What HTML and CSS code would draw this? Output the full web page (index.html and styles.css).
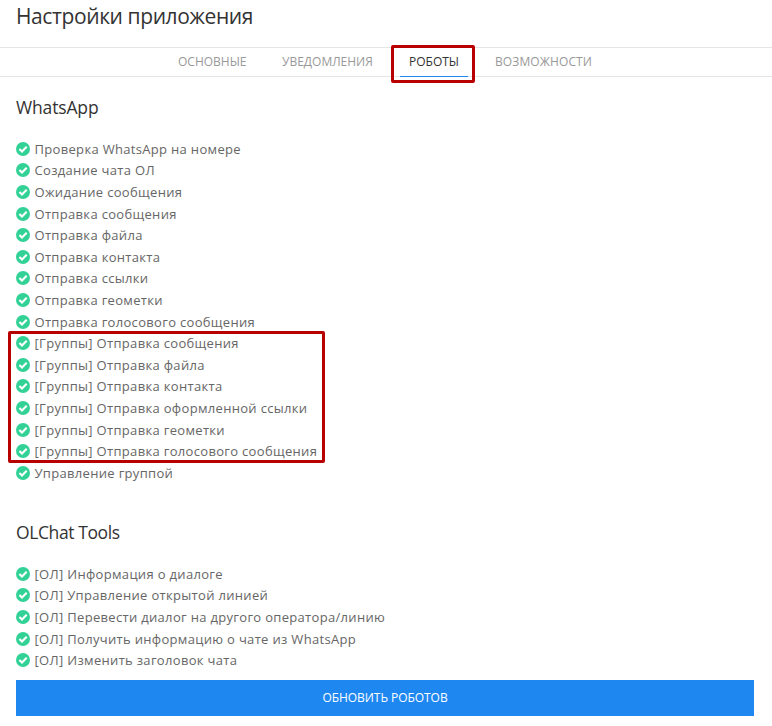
FILE: index.html
```html
<!DOCTYPE html>
<html lang="ru">
<head>
<meta charset="utf-8">
<title>Настройки приложения</title>
<link rel="stylesheet" href="styles.css">
</head>
<body>
<svg class="symbols" aria-hidden="true">
  <symbol id="check" viewBox="0 0 14 14">
    <circle cx="7" cy="7" r="7" fill="#32d296"/>
    <path d="M3.4 7 6 9.5 10.7 4.8" fill="none" stroke="#fff" stroke-width="2.1"/>
  </symbol>
</svg>
<h1 class="title">Настройки приложения</h1>
<nav class="tabs">
  <a class="tab t1">ОСНОВНЫЕ</a>
  <a class="tab t2">УВЕДОМЛЕНИЯ</a>
  <a class="tab t3 active">РОБОТЫ<span class="mark mark-tab"></span></a>
  <a class="tab t4">ВОЗМОЖНОСТИ</a>
</nav>
<main class="content">
  <h2 class="heading wa">WhatsApp</h2>
  <ul class="list">
    <li><svg><use href="#check"/></svg><span>Проверка WhatsApp на номере</span></li>
    <li><svg><use href="#check"/></svg><span>Создание чата ОЛ</span></li>
    <li><svg><use href="#check"/></svg><span>Ожидание сообщения</span></li>
    <li><svg><use href="#check"/></svg><span>Отправка сообщения</span></li>
    <li><svg><use href="#check"/></svg><span>Отправка файла</span></li>
    <li><svg><use href="#check"/></svg><span>Отправка контакта</span></li>
    <li><svg><use href="#check"/></svg><span>Отправка ссылки</span></li>
    <li><svg><use href="#check"/></svg><span>Отправка геометки</span></li>
    <li><svg><use href="#check"/></svg><span>Отправка голосового сообщения</span></li>
    <li><svg><use href="#check"/></svg><span>[Группы] Отправка сообщения</span><span class="mark mark-groups"></span></li>
    <li><svg><use href="#check"/></svg><span>[Группы] Отправка файла</span></li>
    <li><svg><use href="#check"/></svg><span>[Группы] Отправка контакта</span></li>
    <li><svg><use href="#check"/></svg><span>[Группы] Отправка оформленной ссылки</span></li>
    <li><svg><use href="#check"/></svg><span>[Группы] Отправка геометки</span></li>
    <li><svg><use href="#check"/></svg><span>[Группы] Отправка голосового сообщения</span></li>
    <li><svg><use href="#check"/></svg><span>Управление группой</span></li>
  </ul>
  <h2 class="heading ol">OLChat Tools</h2>
  <ul class="list">
    <li><svg><use href="#check"/></svg><span>[ОЛ] Информация о диалоге</span></li>
    <li><svg><use href="#check"/></svg><span>[ОЛ] Управление открытой линией</span></li>
    <li><svg><use href="#check"/></svg><span>[ОЛ] Перевести диалог на другого оператора/линию</span></li>
    <li><svg><use href="#check"/></svg><span>[ОЛ] Получить информацию о чате из WhatsApp</span></li>
    <li><svg><use href="#check"/></svg><span>[ОЛ] Изменить заголовок чата</span></li>
  </ul>
  <button class="update">ОБНОВИТЬ РОБОТОВ</button>
</main>
</body>
</html>
```
FILE: styles.css
```css
* { box-sizing: border-box; }
body {
  margin: 0;
  background: #fff;
  color: #666;
  font-family: "Open Sans", "Noto Sans", sans-serif;
}
.symbols { position: absolute; width: 0; height: 0; }
.title {
  margin: 0;
  height: 47px;
  padding-left: 16px;
  font-size: 21px;
  line-height: 32px;
  font-weight: 400;
  letter-spacing: -0.4px;
  color: #333;
  white-space: nowrap;
}
.tabs {
  display: flex;
  gap: 18px;
  height: 30px;
  padding-left: 169px;
  border-top: 1px solid #e5e5e5;
  border-bottom: 1px solid #e5e5e5;
}
.tab {
  position: relative;
  height: 29px;
  padding: 0 9px;
  font-size: 12px;
  line-height: 28px;
  letter-spacing: 0;
  color: #999;
  white-space: nowrap;
}
.t1 { width: 86px; }
.t2 { width: 109px; }
.t3 { width: 68px; }
.t4 { width: 115px; letter-spacing: 0.12px; }
.active { color: #333; border-bottom: 1px solid #1e87f0; }
.mark { position: absolute; border: 3px solid #b80000; border-radius: 2px; }
.mark-tab { left: -9px; top: -3px; width: 84px; height: 38px; }
.content { padding: 0 18px 0 16px; }
.heading {
  margin: 0;
  font-size: 17.5px;
  line-height: 26px;
  font-weight: 400;
  letter-spacing: -0.15px;
  color: #333;
}
.wa { padding-top: 17px; }
.ol { padding-top: 35.6px; letter-spacing: -0.4px; }
.list { list-style: none; margin: 18px 0 0; padding: 0; }
.list li {
  position: relative;
  display: flex;
  align-items: center;
  gap: 4.5px;
  height: 21.6px;
  font-size: 13px;
  white-space: nowrap;
  letter-spacing: 0.32px;
}
.list svg { width: 14px; height: 14px; flex: none; }
.mark-groups { left: -8px; top: -1px; width: 317px; height: 132px; }
.update {
  display: block;
  width: 100%;
  height: 36px;
  margin-top: 9.3px;
  padding: 0;
  border: 0;
  background: #1e87f0;
  color: #fff;
  font: 12px/36px "Open Sans", "Noto Sans", sans-serif;
  letter-spacing: -0.05px;
}
```
